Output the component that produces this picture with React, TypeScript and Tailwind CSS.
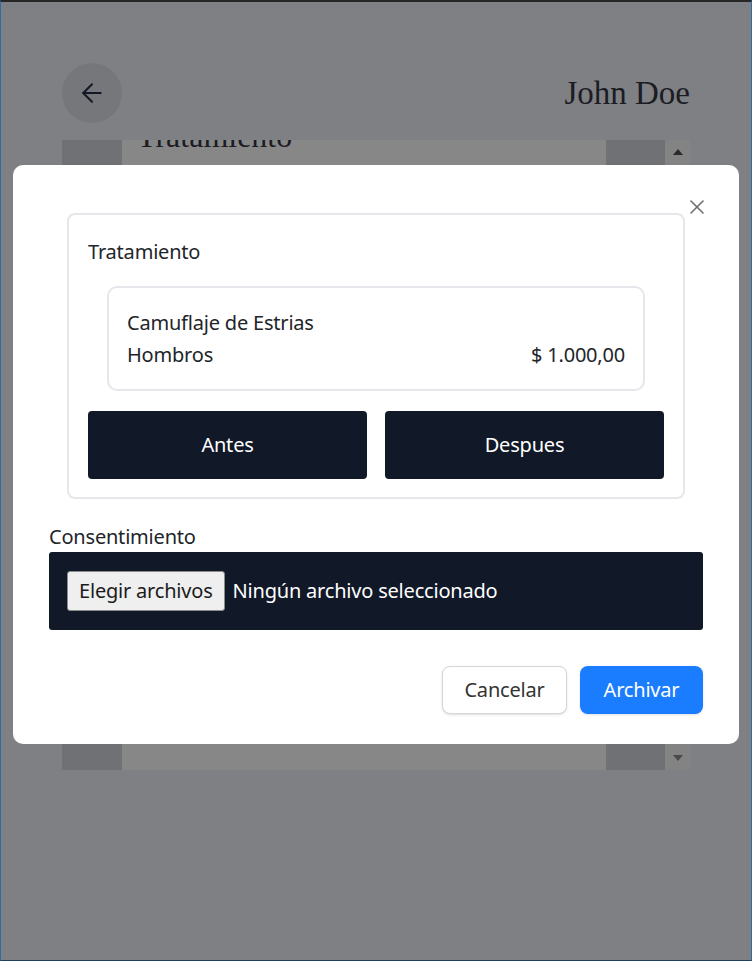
import { X, ArrowLeft } from "lucide-react";

const sans = { fontFamily: '"Noto Sans", "Open Sans", sans-serif' };

function Backdrop() {
	return (
		<div className="flex flex-col px-[61px] pt-[61px] h-full">
			<div className="flex items-center justify-between h-[60px]">
				<div className="w-[60px] h-[60px] rounded-full bg-[#76777a] flex items-center justify-center">
					<ArrowLeft size={30} strokeWidth={1.6} className="text-[#141826]" />
				</div>
				<h1 className="font-['Liberation_Serif',serif] text-[33px] text-[#1b1c24] leading-none">
					John Doe
				</h1>
			</div>
			<div className="mt-[17px] h-[630px] flex">
				<div className="w-[60px] bg-[#707174]" />
				<div className="flex-1 bg-[#878787] overflow-hidden">
					<h2 className="font-['Liberation_Serif',serif] text-[32px] text-[#1b1c24] leading-none pl-[15px] -mt-[20px]">
						Tratamiento
					</h2>
				</div>
				<div className="w-[59px] bg-[#707174]" />
				<div className="w-[25px] bg-[#838384] flex flex-col justify-between items-center py-[9px]">
					<span className="w-0 h-0 border-x-[5px] border-x-transparent border-b-[6px] border-b-[#2a2a2a]" />
					<span className="w-0 h-0 border-x-[5px] border-x-transparent border-t-[6px] border-t-[#4a4a4a]" />
				</div>
			</div>
		</div>
	);
}

function Modal() {
	return (
		<div
			className="absolute left-[12px] top-[163px] w-[726px] bg-white rounded-[10px] px-[36px] pt-[48px] pb-[30px] text-[20px] tracking-[-0.2px] text-[#212529]"
			style={sans}
		>
			<button className="absolute right-[30px] top-[30px] text-[#6e6e6e]">
				<X size={24} strokeWidth={1.6} />
			</button>

			<div className="mx-[18px] border-2 border-[#e5e7eb] rounded-[8px] px-[19px] pt-[22px] pb-[18px]">
				<p className="leading-[30px]">Tratamiento</p>
				<div className="mx-[19px] mt-[19px] border-2 border-[#e5e7eb] rounded-[10px] px-[18px] pt-[20px] pb-[19px] flex flex-col gap-[2px]">
					<p className="leading-[30px]">Camuflaje de Estrias</p>
					<div className="flex justify-between leading-[30px]">
						<span>Hombros</span>
						<span>$ 1.000,00</span>
					</div>
				</div>
				<div className="grid grid-cols-2 gap-[18px] mt-[20px]">
					<button className="h-[68px] bg-[#111827] text-white rounded-[4px]">Antes</button>
					<button className="h-[68px] bg-[#111827] text-white rounded-[4px]">Despues</button>
				</div>
			</div>

			<p className="mt-[23px] leading-[30px]">Consentimiento</p>
			<div className="h-[78px] bg-[#111827] rounded-[3px] flex items-center px-[18px] gap-[8px]">
				<span className="h-[40px] px-[11px] flex items-center bg-[#efefef] border border-[#8a8a8a] rounded-[3px] text-[#1b1b1b]">
					Elegir archivos
				</span>
				<span className="text-white">Ningún archivo seleccionado</span>
			</div>

			<div className="flex justify-end gap-[13px] mt-[36px]">
				<button className="h-[48px] w-[125px] border border-[#d6d6d6] rounded-[8px] text-[#333] bg-white shadow-sm">
					Cancelar
				</button>
				<button className="h-[48px] w-[123px] rounded-[8px] bg-[#1a7cfe] text-white shadow-sm">
					Archivar
				</button>
			</div>
		</div>
	);
}

export default function App() {
	return (
		<div className="relative w-full h-[961px] bg-[#7f8083] border-t-2 border-t-[#262626] border-x border-x-[#2e6ea8] border-b border-b-[#1f3f5f] overflow-hidden">
			<Backdrop />
			<Modal />
		</div>
	);
}
